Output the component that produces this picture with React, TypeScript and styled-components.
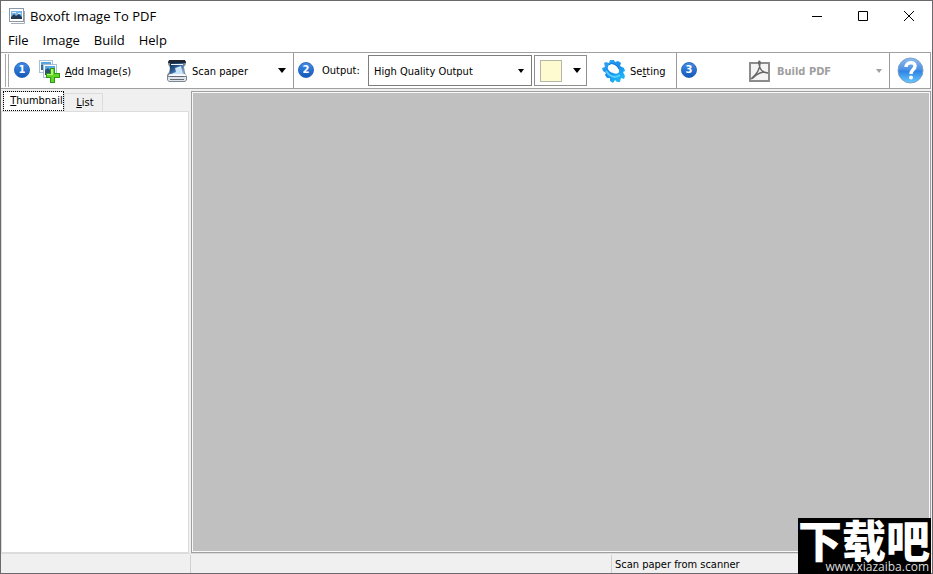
import React from "react";
import styled, { createGlobalStyle } from "styled-components";

const GlobalStyle = createGlobalStyle`
  * { box-sizing: border-box; }
  body { margin: 0; background: #fff; }
  button, select { font: inherit; color: inherit; }
  button { border: 0; padding: 0; background: none; }
`;

const Window = styled.div`
  display: flex;
  flex-direction: column;
  height: 100vh;
  border: 1px solid #6b696b;
  background: #fff;
  color: #000;
  font: 11px/16px "DejaVu Sans Condensed", "DejaVu Sans", sans-serif;
`;

const TitleBar = styled.header`
  display: flex;
  align-items: center;
  height: 29px;
  padding-left: 8px;
  font: 13px/20px "Open Sans", sans-serif;
`;

const Title = styled.h1`
  flex: 1;
  margin: 0 0 0 5px;
  font: inherit;
`;

const CaptionButton = styled.button`
  display: flex;
  align-items: center;
  justify-content: center;
  width: 46px;
  height: 29px;
`;

const MenuBar = styled.nav`
  display: flex;
  align-items: flex-start;
  gap: 14px;
  height: 22px;
  padding-left: 7px;
  font: 13px/20px "Open Sans", sans-serif;
`;

const ToolBar = styled.div`
  display: flex;
  flex: none;
  align-items: center;
  height: 37px;
  margin-right: 1px;
  padding-left: 4px;
  border: 1px solid #a0a0a0;
  border-left: 0;
`;

const Grip = styled.span`
  width: 4px;
  height: 33px;
  margin-right: 1px;
  border: solid #a9a9a9;
  border-width: 0 1px;
`;

const Group = styled.div<{ $grow?: boolean }>`
  display: flex;
  align-items: center;
  height: 35px;
  flex: ${(p) => (p.$grow ? "1" : "none")};
`;

const Separator = styled.span`
  width: 1px;
  height: 35px;
  background: #9b9b9b;
`;

const Step = styled.span`
  display: flex;
  align-items: center;
  justify-content: center;
  width: 16px;
  height: 16px;
  margin: 0 8px 2px 4px;
  border-radius: 50%;
  background: linear-gradient(#408be4, #1559b9);
  border: 1px solid #2868bd;
  color: #fff;
  font: bold 10px/14px "DejaVu Sans", sans-serif;
`;

const ToolButton = styled.button<{ $width: number; $muted?: boolean }>`
  display: flex;
  align-items: center;
  gap: ${(p) => (p.$muted ? 7 : 4)}px;
  width: ${(p) => p.$width}px;
  height: 32px;
  white-space: nowrap;
  color: ${(p) => (p.$muted ? "#a0a0a0" : "#000")};
  font-weight: ${(p) => (p.$muted ? "bold" : "normal")};
  > svg { flex: none; }
  > svg:last-child:not(:first-child) { margin: 0 7px 0 auto; }
`;

const ToolText = styled.span`
  padding-top: 2px;
`;

const OutputLabel = styled.label`
  width: 38px;
  margin-right: 8px;
  padding-top: 1px;
  white-space: nowrap;
`;

const SelectFrame = styled.span`
  display: grid;
  align-items: center;
  width: 164px;
  height: 31px;
  border: 1px solid #7e7e7e;
  > * { grid-area: 1 / 1; }
  > svg { justify-self: end; margin-right: 7px; pointer-events: none; }
`;

const OutputSelect = styled.select`
  width: 100%;
  height: 29px;
  padding: 2px 20px 0 5px;
  border: 0;
  background: transparent;
  appearance: none;
`;

const ColorButton = styled.button`
  display: flex;
  align-items: center;
  justify-content: space-between;
  width: 53px;
  height: 31px;
  margin: 0 15px 0 2px;
  padding: 0 5px;
  border: 1px solid #8e8e8e;
`;

const Swatch = styled.span`
  width: 22px;
  height: 22px;
  border: 1px solid #b5b5a8;
  background: #fffbd0;
`;

const HelpButton = styled.button`
  display: flex;
  margin: 0 6px 0 7px;
`;

const Content = styled.main`
  display: flex;
  flex: 1;
  min-height: 0;
  padding: 2px 1px 0 0;
  background: #f0f0f0;
`;

const SidePanel = styled.section`
  display: flex;
  flex-direction: column;
  flex: none;
  width: 188px;
  margin-right: 2px;
`;

const TabList = styled.div`
  display: flex;
  align-items: flex-end;
  height: 20px;
  padding-left: 2px;
`;

const Tab = styled.button<{ $active?: boolean }>`
  height: ${(p) => (p.$active ? 20 : 18)}px;
  width: ${(p) => (p.$active ? 61 : 39)}px;
  padding: ${(p) => (p.$active ? "0 0 1px 6px" : "1px 0 0 3px")};
  background: ${(p) => (p.$active ? "#fff" : "#f0f0f0")};
  border: 1px solid #dcdcdc;
  border-bottom: 0;
  white-space: nowrap;
  outline: ${(p) => (p.$active ? "1px dotted #000" : "none")};
  outline-offset: -1px;
`;

const TabPage = styled.div`
  flex: 1;
  border: 1px solid #dcdcdc;
  background: #fff;
`;

const Canvas = styled.section`
  flex: 1;
  border: 1px solid #a0a0a0;
  background: #c0c0c0;
  box-shadow: inset 0 0 0 1px #f8f8f8;
`;

const StatusBar = styled.footer`
  display: flex;
  height: 20px;
  padding-top: 1px;
  border-top: 1px solid #dcdcdc;
  background: #f0f0f0;
`;

const StatusCell = styled.span<{ $grow?: boolean; $width?: number }>`
  flex: ${(p) => (p.$grow ? "1" : `0 0 ${p.$width}px`)};
  padding-left: 3px;
  border-right: 1px solid #d0d0d0;
  line-height: 20px;
  &:last-child { border-right: 0; }
`;

const Watermark = styled.aside`
  position: absolute;
  right: 2px;
  bottom: 0;
  display: flex;
  flex-direction: column;
  width: 133px;
  height: 56px;
  background: #000;
  color: #fff;
`;

const WatermarkName = styled.strong`
  font: 900 44px/42px "Noto Sans CJK SC", sans-serif;
  white-space: nowrap;
`;

const WatermarkUrl = styled.span`
  padding-right: 2px;
  color: #ddd;
  font: 12px/14px "Open Sans", sans-serif;
  text-align: right;
`;

const TriangleDown = ({ width = 8, color = "#000" }: { width?: number; color?: string }) => (
  <svg width={width} height={width === 8 ? 5 : 4} viewBox="0 0 8 5" preserveAspectRatio="none" aria-hidden>
    <path d="M0 0h8L4 5z" fill={color} />
  </svg>
);

const AppIcon = () => (
  <svg width="16" height="16" viewBox="0 0 16 16" aria-hidden>
    <path d="M15.500 3v12.500H2" fill="none" stroke="#a5adb8" />
    <rect x=".5" y=".5" width="14" height="13" fill="#fff" stroke="#8c98a8" />
    <rect x="2" y="3" width="11" height="8" fill="#79b4e6" />
    <path d="M2 11V9l3-3 2 2 3-2 3 3v2z" fill="#243952" />
    <path d="M3 4h4v1H3zM9 5h3v1H9z" fill="#d8edfb" />
  </svg>
);

const AddIcon = () => (
  <svg width="23" height="24" viewBox="0 0 23 24" aria-hidden>
    <rect x="1.500" y="1.500" width="13" height="12" fill="#fff" stroke="#a9bfd3" />
    <path d="M3 3h10v3H3z" fill="#5ba5df" /><path d="M3 6h2v5H3z" fill="#386b9e" />
    <rect x="5.500" y="5.500" width="13" height="13" fill="#fff" stroke="#a9bfd3" />
    <path d="M7 7h10v4H7z" fill="#58aae8" /><path d="M7 11l3-2 3 3v4H7z" fill="#285373" />
    <path d="M12 9h5v5h5v5h-5v5h-5v-5H8v-5h4z" fill="#2c9d13" />
    <path d="M13 10h3v5h5v3h-5v5h-3v-5H9v-3h4z" fill="#62d52a" />
    <path d="M13 10h2v6H9v-1h4z" fill="#b5f57b" />
  </svg>
);

const ScannerIcon = () => (
  <svg width="21" height="22" viewBox="0 0 21 22" aria-hidden>
    <defs>
      <linearGradient id="scanGlass" x2="1" y2="1">
        <stop stopColor="#102d49" /><stop offset=".45" stopColor="#2e5f96" /><stop offset="1" stopColor="#9cc4ea" />
      </linearGradient>
    </defs>
    <path d="M1 1h18v3l-2 3 1 6 2 3v4l-2 2H2l-2-2v-5l2-3 1-4-2-4z" fill="#7d8794" />
    <path d="M2 0h16l1 3H1z" fill="#202734" />
    <path d="M3 3h14l-1 3 1 8H3V6z" fill="url(#scanGlass)" />
    <path d="M8 8l6-2 2 8H4l5-2z" fill="#c9e3f8" />
    <path d="M4 4h12v1H4z" fill="#f2f5fa" />
    <path d="M3 14h15l2 2H1z" fill="#f6f8fb" />
    <path d="M1 17h18v3l-1 1H2l-1-1z" fill="#dfe3e7" />
    <path d="M3 16h14v1H3zM3 19h14v1H3z" fill="#626d78" />
  </svg>
);

const GearIcon = () => (
  <svg width="24" height="24" viewBox="0 0 24 24" aria-hidden>
    <defs>
      <linearGradient id="gearBlue" x2=".7" y2="1">
        <stop stopColor="#3eaef8" /><stop offset=".5" stopColor="#168cec" /><stop offset="1" stopColor="#20bdf6" />
      </linearGradient>
    </defs>
    <path fill="url(#gearBlue)" fillRule="evenodd" d="M4 3l3 1 1-3 4 0 1 2 3-1 3 2-1 3 4 2 1 3-2 1 2 4-1 3-3-1-1 4-3 0-2-2-2 3-3-2 0-3-3 0-2-3 1-2-3-2-1-3 3-1-1-4zM7 6c-3 3 0 7 4 8 5 2 8-1 5-5S9 4 7 6z" />
    <path d="M4 12c3 5 9 8 14 4" fill="none" stroke="#55d0ff" strokeWidth="2" />
    <path d="M7 6c2-3 8-1 10 4" fill="none" stroke="#1378ce" />
  </svg>
);

const PdfIcon = () => (
  <svg width="21" height="22" viewBox="0 0 21 22" aria-hidden>
    <rect x="1" y="3" width="19" height="18" fill="#f4f4f4" stroke="#8c8c8c" strokeWidth="2" />
    <path d="M3 18c5-4 8-9 8-15 0-3-2-2-1 1 1 6 4 9 9 9-5-2-10 0-14 4-2 2-3 2-2 1z" fill="none" stroke="#686868" strokeWidth="1.500" />
  </svg>
);

const HelpIcon = () => (
  <svg width="27" height="27" viewBox="0 0 27 27" aria-hidden>
    <defs>
      <linearGradient id="helpBlue" x2="0" y2="1">
        <stop stopColor="#8fbdf2" /><stop offset=".48" stopColor="#4890e6" /><stop offset=".52" stopColor="#2f83e4" /><stop offset="1" stopColor="#65caff" />
      </linearGradient>
    </defs>
    <circle cx="13.500" cy="13.500" r="12.500" fill="url(#helpBlue)" stroke="#7f9fc4" />
    <path d="M9 10c0-5 9-6 9-1 0 4-4 3-4 8" fill="none" stroke="#fff" strokeWidth="3.500" />
    <circle cx="14" cy="20.500" r="2" fill="#fff" />
  </svg>
);

export default function App() {
  return (
    <>
      <GlobalStyle />
      <Window>
        <TitleBar>
          <AppIcon />
          <Title>Boxoft Image To PDF</Title>
          <CaptionButton aria-label="Minimize"><svg width="10" height="10"><path d="M0 5.500h10" stroke="#000" /></svg></CaptionButton>
          <CaptionButton aria-label="Maximize"><svg width="10" height="10"><path d="M.5.5h9v9h-9z" fill="none" stroke="#000" /></svg></CaptionButton>
          <CaptionButton aria-label="Close"><svg width="10" height="10"><path d="M0 0l10 10M10 0L0 10" stroke="#000" /></svg></CaptionButton>
        </TitleBar>
        <MenuBar>
          <button>File</button>
          <button>Image</button>
          <button>Build</button>
          <button>Help</button>
        </MenuBar>
        <ToolBar role="toolbar">
          <Grip />
          <Group>
            <Step>1</Step>
            <ToolButton $width={129}><AddIcon /><ToolText><u>A</u>dd Image(s)</ToolText></ToolButton>
            <ToolButton $width={126}><ScannerIcon /><ToolText>Scan paper</ToolText><TriangleDown /></ToolButton>
          </Group>
          <Group>
            <Separator />
            <Step>2</Step>
            <OutputLabel htmlFor="output">Output:</OutputLabel>
            <SelectFrame>
              <OutputSelect id="output"><option>High Quality Output</option></OutputSelect>
              <TriangleDown width={6} />
            </SelectFrame>
            <ColorButton aria-label="Background color"><Swatch /><TriangleDown /></ColorButton>
            <ToolButton $width={74}><GearIcon /><ToolText>Se<u>t</u>ting</ToolText></ToolButton>
          </Group>
          <Group $grow>
            <Separator />
            <Step>3</Step>
          </Group>
          <Group>
            <ToolButton $width={140} $muted><PdfIcon /><ToolText>Build PDF</ToolText><TriangleDown width={6} color="#a0a0a0" /></ToolButton>
            <Separator />
            <HelpButton aria-label="Help"><HelpIcon /></HelpButton>
          </Group>
        </ToolBar>
        <Content>
          <SidePanel>
            <TabList role="tablist">
              <Tab $active role="tab" aria-selected="true"><u>T</u>humbnail</Tab>
              <Tab role="tab" aria-selected="false"><u>L</u>ist</Tab>
            </TabList>
            <TabPage role="tabpanel" />
          </SidePanel>
          <Canvas />
        </Content>
        <StatusBar>
          <StatusCell $width={190} />
          <StatusCell $grow />
          <StatusCell $width={320}>Scan paper from scanner</StatusCell>
        </StatusBar>
        <Watermark>
          <WatermarkName>下载吧</WatermarkName>
          <WatermarkUrl>www.xiazaiba.com</WatermarkUrl>
        </Watermark>
      </Window>
    </>
  );
}
